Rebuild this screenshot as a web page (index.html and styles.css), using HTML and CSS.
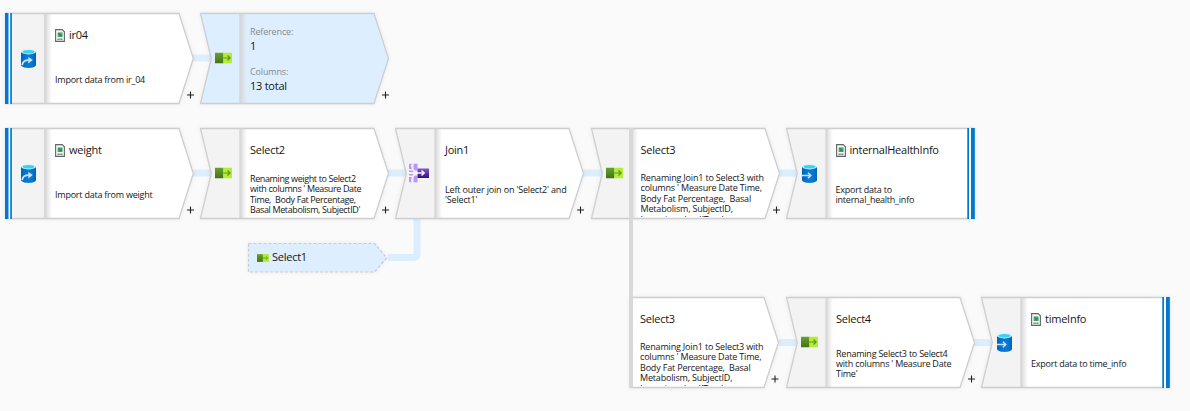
FILE: index.html
```html
<!DOCTYPE html>
<html lang="en">
<head>
<meta charset="utf-8">
<title>Data flow</title>
<link rel="stylesheet" href="styles.css">
</head>
<body>
<svg class="defs" width="0" height="0">
  <defs>
    <linearGradient id="fold"><stop offset="0" stop-color="#d2d2d2" stop-opacity=".75"/><stop offset="1" stop-color="#d8d8d8" stop-opacity="0"/></linearGradient>
    <linearGradient id="green" x1="0" y1="0" x2="0" y2="1"><stop offset="0" stop-color="#67a526"/><stop offset="1" stop-color="#42721a"/></linearGradient>
    <linearGradient id="can"><stop offset="0" stop-color="#0062b8"/><stop offset=".35" stop-color="#0878d4"/><stop offset=".7" stop-color="#0878d4"/><stop offset="1" stop-color="#0062b8"/></linearGradient>
    <linearGradient id="violet" x1="0" y1="0" x2="0" y2="1"><stop offset="0" stop-color="#8257cc"/><stop offset="1" stop-color="#35106f"/></linearGradient>
    <symbol id="select" viewBox="0 0 17 11"><path fill="url(#green)" d="M0 0h8.5v11H0z"/><path fill="#b4ec36" d="M8.3 0H17v11H8.3z"/><path d="M8.3 5.5H15M12.5 3l2.6 2.5L12.5 8" fill="none" stroke="#5d9520" stroke-width="1.2"/></symbol>
    <symbol id="db" viewBox="0 0 15 19"><path fill="url(#can)" d="M0 2.7v13.4C0 17.7 3.3 19 7.5 19s7.500-1.300 7.500-2.900V2.700z"/><ellipse cx="7.500" cy="2.700" rx="7.500" ry="2.700" fill="#d9f0f8"/><ellipse cx="7.500" cy="2.800" rx="6" ry="1.800" fill="#32d4f0"/></symbol>
    <symbol id="source" viewBox="0 0 15 19"><use href="#db" width="15" height="19"/><path d="M1.200 16.300c.2-3.600 3-5.300 7.500-5.100" fill="none" stroke="#c4e4fb" stroke-width="1.800"/><path fill="#c4e4fb" d="M7.300 7.700l4.500 3.400-4.500 3.400z"/></symbol>
    <symbol id="sink" viewBox="0 0 15 19"><use href="#db" width="15" height="19"/><path d="M0 11.500h8.500M6 8.700l2.800 2.800L6 14.300" fill="none" stroke="#c4e4fb" stroke-width="1.500"/></symbol>
    <symbol id="join" viewBox="0 0 20 19"><path fill="#b796f9" d="M0 0h3v5.500H0zM4.500 0H8.500v7H4.500zM0 7h4.500v1.500H0zM0 10.500h4.500V12H0zM0 13.500h3V19H0zM4.500 12h4v7h-4z"/><path fill="url(#violet)" d="M8.500 5H20v9.500H8.500z"/><path d="M2.500 1c.5 4.500 2.600 8.500 7 8.500h5M2.500 18c.5-4.500 2.600-8.500 7-8.500M12.500 7l2.700 2.500-2.700 2.500" fill="none" stroke="#f6f1ff" stroke-width="1.500"/></symbol>
    <symbol id="file" viewBox="0 0 10 13"><path d="M.6.6h6.600l2.200 2.200v9.600H.6z" fill="#f5f7f6" stroke="#5e6865" stroke-width="1.100"/><path fill="#2f9459" d="M2.700 3.500h4.800v4.400H2.700z"/><path d="M3 6.500l1-.8M4.800 4.300h2" stroke="#7bc79a" stroke-width=".7"/><path d="M2.500 10.200h5.200" stroke="#70777a" stroke-width="1.400" stroke-dasharray="1.300 .5"/></symbol>
    <symbol id="plus" viewBox="0 0 8 8"><path d="M4 .5v7M.5 4h7" stroke="#222" stroke-width="1.100"/></symbol>
    <g id="source-shape">
      <path class="face" d="M.5.5H174l14.300 45L174 90.500H.5z"/>
      <path class="rail" d="M6 1h34v89H6z"/><path fill="url(#fold)" d="M41 1h6v89h-6z"/><path class="divider" d="M40 1v89"/>
      <path class="outline" d="M.5.5H174l14.300 45L174 90.500H.5z"/>
      <path fill="#fff" d="M3 0h4v91H3z"/><path class="stripe" d="M0 0h3.500v91H0zM5.200 0h1.700v91H5.200z"/>
    </g>
    <g id="step-shape">
      <path class="face" d="M.5.500H174l14.500 45-14.500 45H.5l10.800-45z"/>
      <path class="rail" d="M1 1h38v89H1l10.500-44.500z"/><path fill="url(#fold)" d="M41 1h6v89h-6z"/><path class="divider" d="M40.200 1v89"/>
      <path class="outline" d="M.5.500H174l14.500 45-14.500 45H.5l10.800-45z"/>
    </g>
    <g id="sink-shape">
      <path class="face" d="M.5.500H188.500v90H.5l10.800-45z"/>
      <path class="rail" d="M1 1h38v89H1l10.500-44.500z"/><path fill="url(#fold)" d="M41 1h6v89h-6z"/><path class="divider" d="M40.200 1v89"/>
      <path class="outline" d="M.5.500H188.500v90H.5l10.800-45z"/>
      <path fill="#fff" d="M182 0h4v91h-4z"/><path class="stripe" d="M181.300 0h1.700v91h-1.700zM185 0h3.800v91H185z"/>
    </g>
  </defs>
</svg>

<main class="canvas">
  <svg class="links" width="1190" height="411">
    <path d="M193 58h18M193 173h18M388 173h19M583 173h19M779 173h19M779 342.500h19M974 342.500h19"/>
    <path d="M388 257.500h25.500q3.500 0 3.500-3.500v-35" stroke-linejoin="round"/>
  </svg>

  <section class="node source n-ir04">
    <svg class="shape"><use href="#source-shape"/><use href="#source" x="16" y="36" width="15" height="19"/><use href="#plus" x="181.500" y="78" width="8" height="8"/></svg>
    <h2><svg class="file"><use href="#file"/></svg>ir04</h2>
    <p>Import data from ir_04</p>
  </section>
  <section class="node picked n-select1">
    <svg class="shape"><use href="#step-shape"/><use href="#select" x="15" y="39.500" width="17" height="11"/><use href="#plus" x="181.500" y="78" width="8" height="8"/></svg>
    <dl><dt>Reference:</dt><dd>1</dd><dt>Columns:</dt><dd>13 total</dd></dl>
  </section>

  <section class="node source n-weight">
    <svg class="shape"><use href="#source-shape"/><use href="#source" x="16" y="36" width="15" height="19"/><use href="#plus" x="181.500" y="78" width="8" height="8"/></svg>
    <h2><svg class="file"><use href="#file"/></svg>weight</h2>
    <p>Import data from weight</p>
  </section>
  <section class="node n-select2">
    <svg class="shape"><use href="#step-shape"/><use href="#select" x="15" y="39.500" width="17" height="11"/><use href="#plus" x="181.500" y="78" width="8" height="8"/></svg>
    <h2>Select2</h2>
    <p>Renaming weight to Select2<br>with columns ' Measure Date<br>Time, &nbsp;Body Fat Percentage,<br>Basal Metabolism, SubjectID'</p>
  </section>
  <section class="node n-join1">
    <svg class="shape"><use href="#step-shape"/><use href="#join" x="14" y="35.500" width="20" height="19"/><use href="#plus" x="181.500" y="78" width="8" height="8"/></svg>
    <h2>Join1</h2>
    <p>Left outer join on 'Select2' and<br>'Select1'</p>
  </section>
  <section class="node long n-select3">
    <svg class="shape"><use href="#step-shape"/><use href="#select" x="15" y="39.500" width="17" height="11"/><use href="#plus" x="181.500" y="78" width="8" height="8"/></svg>
    <h2>Select3</h2>
    <p>Renaming Join1 to Select3 with<br>columns ' Measure Date Time,<br>Body Fat Percentage, &nbsp;Basal<br>Metabolism, SubjectID,<br>Ingestion_date'(Total</p>
  </section>
  <section class="node n-health">
    <svg class="shape"><use href="#sink-shape"/><use href="#sink" x="16" y="36" width="15" height="19"/></svg>
    <h2><svg class="file"><use href="#file"/></svg>internalHealthInfo</h2>
    <p>Export data to<br>internal_health_info</p>
  </section>

  <section class="reference">
    <svg class="shape"><path class="dashed" d="M.500.500H126.500l12.300 14.500-12.300 14H.500z"/></svg>
    <svg class="badge"><use href="#select"/></svg>
    <span>Select1</span>
  </section>

  <section class="node long n-branch">
    <svg class="shape"><path class="face outline" d="M40.500.500H174l14.500 45-14.500 45H40.500z"/><use href="#plus" x="181" y="78" width="8" height="8"/></svg>
    <h2>Select3</h2>
    <p>Renaming Join1 to Select3 with<br>columns ' Measure Date Time,<br>Body Fat Percentage, &nbsp;Basal<br>Metabolism, SubjectID,<br>Ingestion_date'(Total</p>
  </section>
  <section class="node n-select4">
    <svg class="shape"><use href="#step-shape"/><use href="#select" x="15" y="39.500" width="17" height="11"/><use href="#plus" x="181.500" y="78" width="8" height="8"/></svg>
    <h2>Select4</h2>
    <p>Renaming Select3 to Select4<br>with columns ' Measure Date<br>Time'</p>
  </section>
  <section class="node n-time">
    <svg class="shape"><use href="#sink-shape"/><use href="#sink" x="16" y="36" width="15" height="19"/></svg>
    <h2><svg class="file"><use href="#file"/></svg>timeInfo</h2>
    <p>Export data to time_info</p>
  </section>
  <div class="branch-line"></div>
</main>
</body>
</html>
```

FILE: styles.css
```css
body { margin: 0; background: #fafafa; color: #161616; font-family: "Open Sans", "Noto Sans", sans-serif; overflow: hidden; }
.defs { position: absolute; }
.canvas { position: relative; width: 1190px; height: 411px; }
.links { position: absolute; inset: 0; fill: none; stroke: #dceefd; stroke-width: 7; }
.node { position: absolute; width: 190px; height: 91px; box-sizing: border-box; padding: 14px 0 0 50px; }
.shape { position: absolute; left: 0; top: 0; width: 100%; height: 100%; overflow: visible; filter: drop-shadow(0 0 2px rgba(0,0,0,.07)); }
.node .shape { top: .5px; }
.face { fill: var(--face, #fff); }
.rail { fill: var(--rail, #f3f3f3); }
.divider { stroke: #d8d8d8; stroke-width: 2; }
.outline { fill: none; stroke: #cecece; stroke-width: 1.3; }
.face.outline { fill: #fff; }
.stripe { fill: #0078d4; }
.picked { --face: #dceeff; --rail: #dceeff; }
h2 { position: relative; display: flex; align-items: center; gap: 4px; margin: 0; height: 18px; font-size: 11px; line-height: 18px; font-weight: 400; letter-spacing: -.25px; white-space: nowrap; }
.file { width: 10px; height: 13px; flex: none; }
p { position: relative; display: flow-root; margin: 0; height: 44px; font-size: 9px; line-height: 10.4px; letter-spacing: -.23px; white-space: nowrap; overflow: hidden; box-sizing: border-box; margin-top: 15px; padding-top: 16px; }
.n-select2 p { padding-top: 0; letter-spacing: -.38px; }
.n-join1 p, .n-health p { padding-top: 11px; }
.n-join1 p { letter-spacing: -.17px; }
.n-select4 p { padding-top: 5.500px; }
.long p { margin-top: 14px; padding-top: 0; height: 44px; letter-spacing: -.18px; }
dl { position: relative; margin: -1px 0 0; font-size: 11px; line-height: 14px; letter-spacing: -.25px; }
dt { font-size: 9px; line-height: 13px; color: #858b90; letter-spacing: -.15px; }
dd { margin: 0 0 12px; line-height: 15px; }
.n-ir04 { left: 5px; top: 12px; }
.n-select1 { left: 200px; top: 12px; }
.n-weight { left: 5px; top: 127px; }
.n-select2 { left: 200px; top: 127px; }
.n-join1 { left: 395px; top: 127px; }
.n-select3 { left: 590.500px; top: 127px; }
.n-health { left: 785.500px; top: 127px; }
.n-branch { left: 590px; top: 296px; }
.n-select4 { left: 786px; top: 296px; }
.n-time { left: 981px; top: 296px; }
.reference { position: absolute; left: 248px; top: 243px; width: 139px; height: 29px; display: flex; align-items: center; gap: 3px; box-sizing: border-box; padding-left: 9px; font-size: 11px; letter-spacing: -.25px; }
.dashed { fill: #dceeff; stroke: #c9cdd1; stroke-width: 1.2; stroke-dasharray: 3 2; }
.badge { position: relative; width: 12px; height: 8px; }
.reference span { position: relative; top: -1px; }
.branch-line { position: absolute; left: 629px; top: 128px; width: 4px; height: 260px; background: #d8d8d8; }
```
